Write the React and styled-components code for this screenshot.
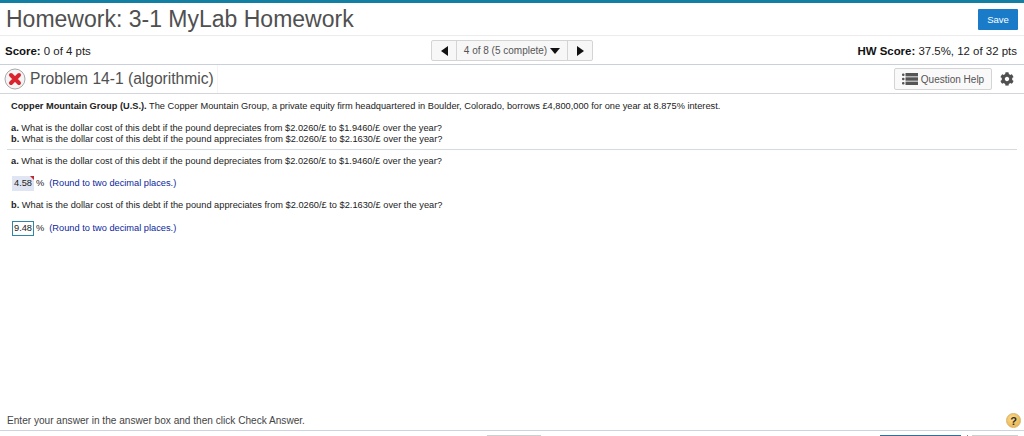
import React from "react"
import styled, { createGlobalStyle } from "styled-components"
import { FaCog } from "react-icons/fa"

const Global = createGlobalStyle`
  html, body {
    margin: 0;
    padding: 0;
    background: #fff;
    overflow: hidden;
  }
  body {
    font-family: "Liberation Sans", Arial, sans-serif;
  }
`

const Page = styled.div`
  width: 1024px;
  height: 436px;
  display: flex;
  flex-direction: column;
  border-top: 3px solid #127fa3;
  box-sizing: border-box;
`

const TitleRow = styled.header`
  height: 32px;
  flex: none;
  display: flex;
  align-items: center;
  justify-content: space-between;
  padding: 0 6px;
  border-bottom: 1px solid #ececec;
`

const Title = styled.h1`
  margin: 0;
  font-size: 23px;
  font-weight: 400;
  color: #505050;
  white-space: nowrap;
`

const SaveButton = styled.button`
  width: 40px;
  height: 21px;
  border: 0;
  border-radius: 1px;
  padding: 0;
  background: #1a7cc9;
  color: #fff;
  font: 9.5px "Liberation Sans", Arial, sans-serif;
`

const ScoreRow = styled.div`
  height: 27px;
  flex: none;
  display: grid;
  grid-template-columns: 426px 162px 1fr;
  align-items: center;
  padding: 1px 7px 0 5px;
  border-bottom: 1px solid #c9d0dc;
  font-size: 11.45px;
  color: #222;
`

const Score = styled.div`
  white-space: nowrap;
  text-align: ${(p) => (p.$right ? "right" : "left")};
  b {
    color: #111;
  }
`

const Pager = styled.div`
  height: 21px;
  width: 162px;
  display: flex;
  border: 1px solid #d4d4d4;
  border-radius: 2px;
  background: #f7f7f7;
  box-sizing: border-box;
`

const PagerArrow = styled.div`
  width: 24px;
  flex: none;
  display: flex;
  align-items: center;
  justify-content: center;
  & + div {
    border-left: 1px solid #d4d4d4;
  }
`

const Triangle = styled.span`
  width: 0;
  height: 0;
  border-top: 5px solid transparent;
  border-bottom: 5px solid transparent;
  ${(p) => (p.$left ? "border-right: 7px solid #111;" : "border-left: 7px solid #111;")}
`

const PagerLabel = styled.div`
  flex: 1;
  display: flex;
  align-items: center;
  justify-content: center;
  gap: 3px;
  border-right: 1px solid #d4d4d4;
  font-size: 10px;
  color: #555;
  white-space: nowrap;
`

const DownTriangle = styled.span`
  width: 0;
  height: 0;
  border-left: 5px solid transparent;
  border-right: 5px solid transparent;
  border-top: 6px solid #111;
`

const ProblemRow = styled.div`
  height: 28px;
  flex: none;
  display: flex;
  align-items: center;
  padding: 0 10px 0 4px;
  border-bottom: 1px solid #d3d5dc;
`

const ProblemTitle = styled.h2`
  align-self: stretch;
  display: flex;
  align-items: center;
  margin: 0 0 0 4px;
  padding-right: 3px;
  border-right: 1px solid #f4f4f4;
  font-size: 15.6px;
  font-weight: 400;
  color: #505050;
  white-space: nowrap;
`

const HelpButton = styled.button`
  width: 98px;
  height: 22px;
  margin-left: auto;
  display: flex;
  align-items: center;
  justify-content: center;
  gap: 3px;
  padding: 0;
  border: 1px solid #d4d4d4;
  border-radius: 2px;
  background: #f9f9f9;
  color: #555;
  font: 10px "Liberation Sans", Arial, sans-serif;
`

const GearWrap = styled.div`
  width: 14px;
  margin-left: 8px;
  color: #505050;
  display: flex;
`

const Content = styled.main`
  flex: 1;
  padding: 7px 7px 0 11px;
  font-size: 9.25px;
  line-height: 11px;
  color: #222;
`

const Paragraph = styled.p`
  margin: ${(p) => p.$top || 0}px 0 ${(p) => p.$gap || 0}px;
  white-space: nowrap;
`

const Rule = styled.hr`
  margin: 4px 0 0 -4px;
  border: 0;
  border-top: 1px solid #d3dbe0;
`

const AnswerLine = styled.div`
  display: flex;
  align-items: center;
  height: 15px;
  margin: ${(p) => p.$top}px 0 ${(p) => p.$bottom}px 1px;
  white-space: nowrap;
`

const AnswerBox = styled.span`
  position: relative;
  width: 22px;
  height: 15px;
  display: flex;
  align-items: center;
  justify-content: center;
  box-sizing: border-box;
  background: ${(p) => (p.$active ? "#fff" : "#dfe5f2")};
  border: ${(p) => (p.$active ? "1px solid #2f86a6" : "0")};
  color: #222;
`

const WrongMark = styled.span`
  position: absolute;
  top: 0;
  right: 0;
  width: 0;
  height: 0;
  border-top: 4px solid #c0272d;
  border-left: 4px solid transparent;
`

const Percent = styled.span`
  margin-left: 2px;
`

const Hint = styled.span`
  margin-left: 5px;
  color: #0b1f9c;
`

const Footer = styled.footer`
  height: 19px;
  flex: none;
  display: flex;
  align-items: center;
  justify-content: space-between;
  padding: 5px 3px 0 7px;
  border-bottom: 1px solid #cdd3e0;
  margin-bottom: 5px;
  font-size: 10.1px;
  color: #444;
`

const HelpBadge = styled.span`
  width: 15px;
  height: 15px;
  border-radius: 50%;
  display: flex;
  align-items: center;
  justify-content: center;
  background: radial-gradient(circle at 40% 35%, #fbdc8c, #e8a93e);
  border: 1px solid #d7b36d;
  box-sizing: border-box;
  color: #2b2b33;
  font-size: 11px;
  font-weight: 700;
`

const Scrollbits = styled.div`
  position: absolute;
  left: 0;
  top: 435px;
  width: 1024px;
  height: 1px;
`

const Bit = styled.span`
  position: absolute;
  top: 0;
  height: 1px;
  left: ${(p) => p.$left}px;
  width: ${(p) => p.$width}px;
  background: ${(p) => p.$color};
`

const WrongIcon = () => (
  <svg width="22" height="22" viewBox="0 0 22 22">
    <circle cx="11" cy="11" r="10" fill="#f4f4f4" stroke="#a8a8a8" strokeWidth="1" />
    <path d="M7 7 L15 15 M15 7 L7 15" stroke="#d9232e" strokeWidth="4" strokeLinecap="round" />
  </svg>
)

const HelpIcon = () => (
  <svg width="16" height="12" viewBox="0 0 16 12" fill="#555">
    <rect x="0" y="0.5" width="2.5" height="2.5" rx="1" />
    <rect x="0" y="4.75" width="2.5" height="2.5" rx="1" />
    <rect x="0" y="9" width="2.5" height="2.5" rx="1" />
    <rect x="3.5" y="0" width="12.5" height="3.4" />
    <rect x="3.5" y="4.3" width="12.5" height="3.4" />
    <rect x="3.5" y="8.6" width="12.5" height="3.4" />
  </svg>
)

const questionA = "What is the dollar cost of this debt if the pound depreciates from $2.0260/£ to $1.9460/£ over the year?"
const questionB = "What is the dollar cost of this debt if the pound appreciates from $2.0260/£ to $2.1630/£ over the year?"

const App = () => (
  <Page>
    <Global />
    <TitleRow>
      <Title>Homework: 3-1 MyLab Homework</Title>
      <SaveButton>Save</SaveButton>
    </TitleRow>
    <ScoreRow>
      <Score>
        <b>Score:</b> 0 of 4 pts
      </Score>
      <Pager>
        <PagerArrow>
          <Triangle $left />
        </PagerArrow>
        <PagerLabel>
          4 of 8 (5 complete) <DownTriangle />
        </PagerLabel>
        <PagerArrow>
          <Triangle />
        </PagerArrow>
      </Pager>
      <Score $right>
        <b>HW Score:</b> 37.5%, 12 of 32 pts
      </Score>
    </ScoreRow>
    <ProblemRow>
      <WrongIcon />
      <ProblemTitle>Problem 14-1 (algorithmic)</ProblemTitle>
      <HelpButton>
        <HelpIcon />
        Question Help
      </HelpButton>
      <GearWrap>
        <FaCog size={14} />
      </GearWrap>
    </ProblemRow>
    <Content>
      <Paragraph $gap={11}>
        <b>Copper Mountain Group (U.S.).</b> The Copper Mountain Group, a private equity firm headquartered in Boulder,
        Colorado, borrows £4,800,000 for one year at 8.875% interest.
      </Paragraph>
      <Paragraph>
        <b>a.</b> {questionA}
      </Paragraph>
      <Paragraph>
        <b>b.</b> {questionB}
      </Paragraph>
      <Rule />
      <Paragraph $top={6}>
        <b>a.</b> {questionA}
      </Paragraph>
      <AnswerLine $top={9} $bottom={9}>
        <AnswerBox>
          4.58
          <WrongMark />
        </AnswerBox>
        <Percent>%</Percent>
        <Hint>(Round to two decimal places.)</Hint>
      </AnswerLine>
      <Paragraph>
        <b>b.</b> {questionB}
      </Paragraph>
      <AnswerLine $top={10} $bottom={0}>
        <AnswerBox $active>9.48</AnswerBox>
        <Percent>%</Percent>
        <Hint>(Round to two decimal places.)</Hint>
      </AnswerLine>
    </Content>
    <Footer>
      Enter your answer in the answer box and then click Check Answer.
      <HelpBadge>?</HelpBadge>
    </Footer>
    <Scrollbits>
      <Bit $left={487} $width={54} $color="#cfcfcf" />
      <Bit $left={880} $width={81} $color="#2f6ea5" />
      <Bit $left={967} $width={1} $color="#888" />
      <Bit $left={972} $width={46} $color="#cfcfcf" />
    </Scrollbits>
  </Page>
)

export default App
